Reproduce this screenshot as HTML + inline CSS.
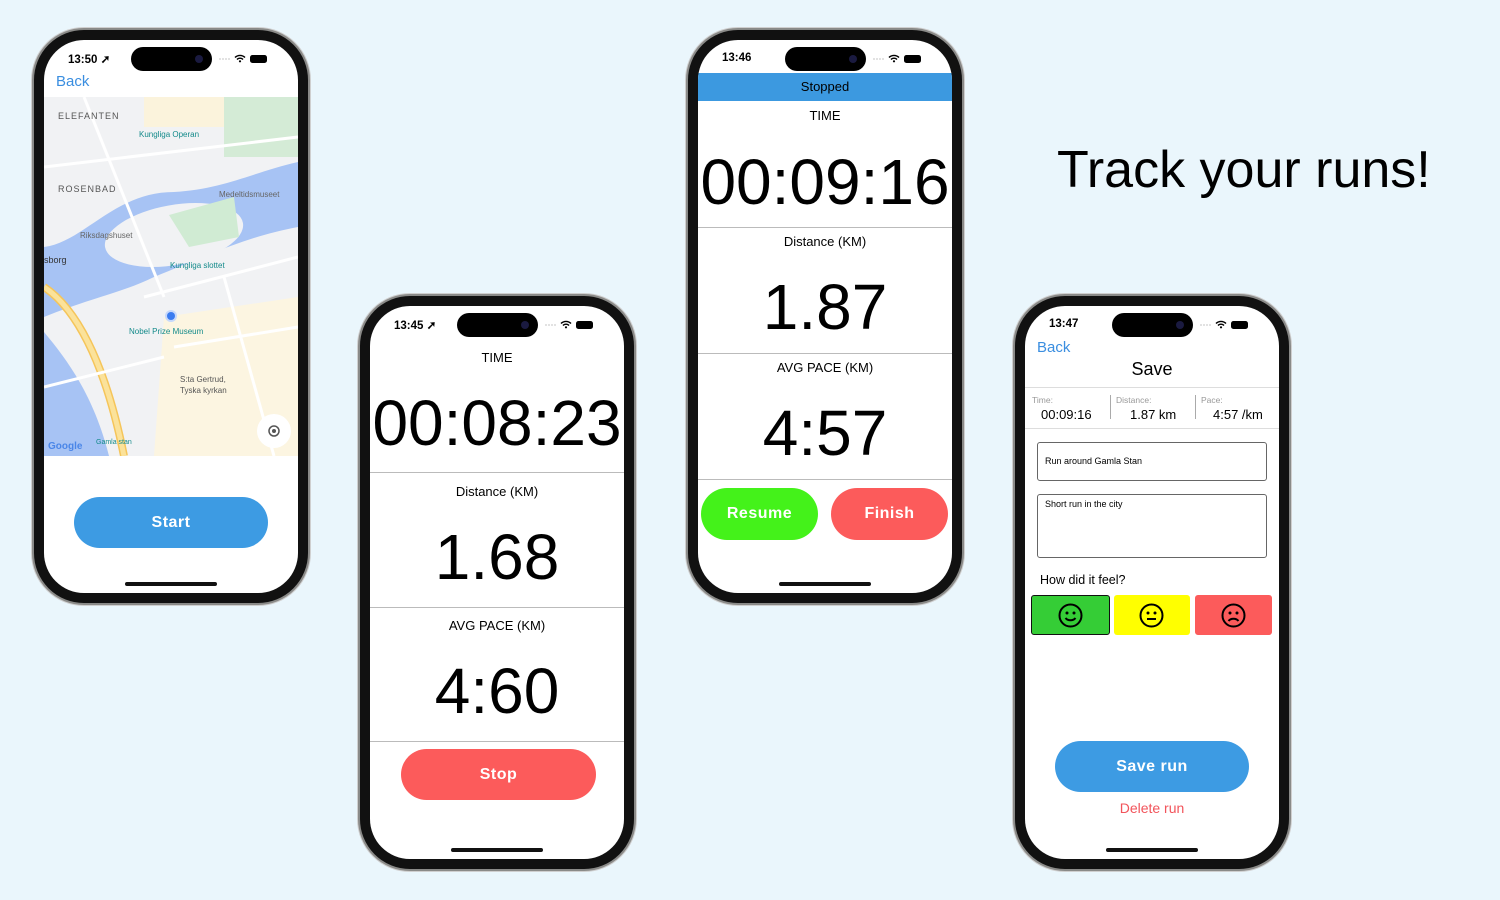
<!DOCTYPE html>
<html><head><meta charset="utf-8"><style>
*{margin:0;padding:0;box-sizing:border-box}
body{width:1500px;height:900px;background:#eaf6fc;position:relative;overflow:hidden;font-family:"Liberation Sans",sans-serif;color:#000}
.ph{position:absolute;width:278px;height:577px;border-radius:52px;background:#111;border:2px solid #8a8a88;box-shadow:0 0 0 1px #cfcfcf}
.sc{position:absolute;left:10px;top:10px;width:254px;height:553px;border-radius:40px;background:#fff;overflow:hidden}
.a{position:absolute}
.isl{position:absolute;left:87px;top:7px;width:81px;height:24px;border-radius:12px;background:#000}
.isl::after{content:"";position:absolute;right:9px;top:8px;width:8px;height:8px;border-radius:50%;background:#1a1a40}
.tm{position:absolute;left:24px;top:12px;font-size:11.5px;font-weight:bold}
.st{position:absolute;right:20px;top:13px;width:60px;height:10px}
.home{position:absolute;left:81px;bottom:7px;width:92px;height:4px;border-radius:2px;background:#111}
.c{position:absolute;left:0;width:254px;text-align:center}
.big{font-size:64px;line-height:64px}
.ln{position:absolute;left:0;width:254px;height:1px;background:#bbb}
.btn{position:absolute;height:51px;border-radius:26px;color:#fff;font-weight:bold;font-size:16px;display:flex;align-items:center;justify-content:center;letter-spacing:.5px}
.back{position:absolute;left:12px;top:33px;color:#3a8ee0;font-size:15px}
</style></head><body>

<svg width="0" height="0" style="position:absolute"><defs>
<g id="stat"><circle cx="2" cy="6" r=".6" fill="#999"/><circle cx="5" cy="6" r=".6" fill="#999"/><circle cx="8" cy="6" r=".6" fill="#999"/><circle cx="11" cy="6" r=".6" fill="#999"/><path d="M17 4.5a7 7 0 0 1 10 0M19 6.5a4 4 0 0 1 6 0" stroke="#000" stroke-width="1.4" fill="none"/><circle cx="22" cy="8.3" r="1.1"/><rect x="32" y="2" width="17" height="8" rx="2.5"/></g>
</defs></svg>

<!-- Phone 1 -->
<div class="ph" style="left:32px;top:28px"><div class="sc">
<div class="tm">13:50 ➚</div><div class="isl"></div><svg class="st" viewBox="0 0 60 10"><use href="#stat"/></svg>
<div class="back">Back</div>
<svg class="a" style="left:0;top:57px" width="254" height="359" viewBox="0 0 254 359">
<rect width="254" height="359" fill="#f1f2f4"/>
<rect x="100" y="0" width="154" height="30" fill="#fbf3dc"/>
<rect x="180" y="0" width="74" height="60" fill="#d4ebd6"/>
<path d="M0 150 C40 145 70 95 130 95 C180 92 210 75 254 65 L254 130 C200 140 160 160 110 180 C80 195 50 200 0 220 Z" fill="#a7c3f4"/>
<ellipse cx="130" cy="138" rx="70" ry="30" fill="#f1f2f4" transform="rotate(-10 130 138)"/>
<path d="M125 118 L190 100 L195 140 L145 150Z" fill="#d0ebd3"/>
<path d="M0 235 C25 265 50 300 65 359 L0 359Z" fill="#a7c3f4"/>
<path d="M120 220 L254 200 L254 359 L110 359Z" fill="#fcf5e1"/>
<path d="M0 190 C30 210 60 260 80 359" stroke="#f5c55a" stroke-width="8" fill="none"/>
<path d="M0 190 C30 210 60 260 80 359" stroke="#fbe29a" stroke-width="5" fill="none"/>
<path d="M0 70 L254 40 M40 0 L120 200 M100 200 L254 160 M130 250 L254 230 M180 180 L230 359 M0 290 L120 260" stroke="#fff" stroke-width="3" fill="none"/>
<text x="14" y="22" font-size="9" fill="#555" letter-spacing="1">ELEFANTEN</text>
<text x="95" y="40" font-size="8" fill="#138a8a">Kungliga Operan</text>
<text x="14" y="95" font-size="9" fill="#555" letter-spacing="1">ROSENBAD</text>
<text x="175" y="100" font-size="8" fill="#666">Medeltidsmuseet</text>
<text x="36" y="141" font-size="8" fill="#666">Riksdagshuset</text>
<text x="0" y="166" font-size="9" fill="#333">sborg</text>
<text x="126" y="171" font-size="8" fill="#138a8a">Kungliga slottet</text>
<text x="85" y="237" font-size="8" fill="#138a8a">Nobel Prize Museum</text>
<text x="136" y="285" font-size="8" fill="#555">S:ta Gertrud,</text>
<text x="136" y="296" font-size="8" fill="#555">Tyska kyrkan</text>
<text x="4" y="352" font-size="10" fill="#4a86e8" font-weight="bold">Google</text>
<text x="52" y="347" font-size="7" fill="#138a8a">Gamla stan</text>
<circle cx="127" cy="219" r="6" fill="#c6d8fb"/><circle cx="127" cy="219" r="4" fill="#3b7cf0"/>
<circle cx="230" cy="334" r="17" fill="#fff"/><circle cx="230" cy="334" r="5" fill="none" stroke="#555" stroke-width="1.5"/><circle cx="230" cy="334" r="2" fill="#555"/>
</svg>
<div class="btn" style="left:30px;top:457px;width:194px;background:#3d9be3">Start</div>
<div class="home"></div>
</div></div>

<!-- Phone 2 -->
<div class="ph" style="left:358px;top:294px"><div class="sc">
<div class="tm">13:45 ➚</div><div class="isl"></div><svg class="st" viewBox="0 0 60 10"><use href="#stat"/></svg>
<div class="c" style="top:44px;font-size:13px">TIME</div>
<div class="c big" style="top:85px">00:08:23</div>
<div class="ln" style="top:166px"></div>
<div class="c" style="top:178px;font-size:13px">Distance (KM)</div>
<div class="c big" style="top:219px">1.68</div>
<div class="ln" style="top:301px"></div>
<div class="c" style="top:312px;font-size:13px">AVG PACE (KM)</div>
<div class="c big" style="top:353px">4:60</div>
<div class="ln" style="top:435px"></div>
<div class="btn" style="left:31px;top:443px;width:195px;background:#fc5b5b">Stop</div>
<div class="home"></div>
</div></div>

<!-- Phone 3 -->
<div class="ph" style="left:686px;top:28px"><div class="sc">
<div class="tm">13:46</div><div class="isl"></div><svg class="st" viewBox="0 0 60 10"><use href="#stat"/></svg>
<div class="a" style="left:0;top:33px;width:254px;height:28px;background:#3c99e0;text-align:center;line-height:28px;font-size:13px">Stopped</div>
<div class="c" style="top:68px;font-size:13px">TIME</div>
<div class="c big" style="top:110px">00:09:16</div>
<div class="ln" style="top:187px"></div>
<div class="c" style="top:194px;font-size:13px">Distance (KM)</div>
<div class="c big" style="top:235px">1.87</div>
<div class="ln" style="top:313px"></div>
<div class="c" style="top:320px;font-size:13px">AVG PACE (KM)</div>
<div class="c big" style="top:361px">4:57</div>
<div class="ln" style="top:439px"></div>
<div class="btn" style="left:3px;top:448px;width:117px;height:52px;background:#44f21a">Resume</div>
<div class="btn" style="left:133px;top:448px;width:117px;height:52px;background:#fc5b5b">Finish</div>
<div class="home"></div>
</div></div>

<div class="a" style="left:1057px;top:140px;font-size:52px;line-height:60px">Track your runs!</div>

<!-- Phone 4 -->
<div class="ph" style="left:1013px;top:294px"><div class="sc">
<div class="tm">13:47</div><div class="isl"></div><svg class="st" viewBox="0 0 60 10"><use href="#stat"/></svg>
<div class="back">Back</div>
<div class="c" style="top:53px;font-size:18px">Save</div>
<div class="ln" style="top:81px;background:#ddd"></div>
<div class="a" style="left:7px;top:89px;font-size:8.5px;color:#999">Time:</div>
<div class="a" style="left:16px;top:101px;font-size:13px">00:09:16</div>
<div class="a" style="left:85px;top:89px;width:1px;height:24px;background:#aaa"></div>
<div class="a" style="left:91px;top:89px;font-size:8.5px;color:#999">Distance:</div>
<div class="a" style="left:105px;top:101px;font-size:13px">1.87 km</div>
<div class="a" style="left:170px;top:89px;width:1px;height:24px;background:#aaa"></div>
<div class="a" style="left:176px;top:89px;font-size:8.5px;color:#999">Pace:</div>
<div class="a" style="left:188px;top:101px;font-size:13px">4:57 /km</div>
<div class="ln" style="top:122px;background:#ddd"></div>
<div class="a" style="left:12px;top:136px;width:230px;height:39px;border:1px solid #666;border-radius:3px;font-size:9px;padding:13px 7px">Run around Gamla Stan</div>
<div class="a" style="left:12px;top:188px;width:230px;height:64px;border:1px solid #666;border-radius:3px;font-size:9px;padding:4px 7px">Short run in the city</div>
<div class="a" style="left:15px;top:267px;font-size:12.5px">How did it feel?</div>
<div class="a" style="left:6px;top:289px;width:79px;height:40px;background:#35cd36;border:1.5px solid #111;border-radius:3px"></div>
<div class="a" style="left:89px;top:289px;width:76px;height:40px;background:#ffff00;border-radius:3px"></div>
<div class="a" style="left:170px;top:289px;width:77px;height:40px;background:#fc5b5b;border-radius:3px"></div>
<svg class="a" style="left:33px;top:297px" width="25" height="25" viewBox="0 0 25 25"><circle cx="12.5" cy="12.5" r="11" fill="none" stroke="#000" stroke-width="2"/><circle cx="9" cy="10" r="1.5"/><circle cx="16" cy="10" r="1.5"/><path d="M7.5 15a6 5 0 0 0 10 0" fill="none" stroke="#000" stroke-width="2"/></svg>
<svg class="a" style="left:114px;top:297px" width="25" height="25" viewBox="0 0 25 25"><circle cx="12.5" cy="12.5" r="11" fill="none" stroke="#000" stroke-width="2"/><circle cx="9" cy="10" r="1.5"/><circle cx="16" cy="10" r="1.5"/><path d="M8 16h9" stroke="#000" stroke-width="2"/></svg>
<svg class="a" style="left:196px;top:297px" width="25" height="25" viewBox="0 0 25 25"><circle cx="12.5" cy="12.5" r="11" fill="none" stroke="#000" stroke-width="2"/><circle cx="9" cy="10" r="1.5"/><circle cx="16" cy="10" r="1.5"/><path d="M7.5 18a6 5 0 0 1 10 0" fill="none" stroke="#000" stroke-width="2"/></svg>
<div class="btn" style="left:30px;top:435px;width:194px;background:#3d9be3">Save run</div>
<div class="c" style="top:494px;font-size:14px;color:#f2545b">Delete run</div>
<div class="home"></div>
</div></div>
</body></html>
